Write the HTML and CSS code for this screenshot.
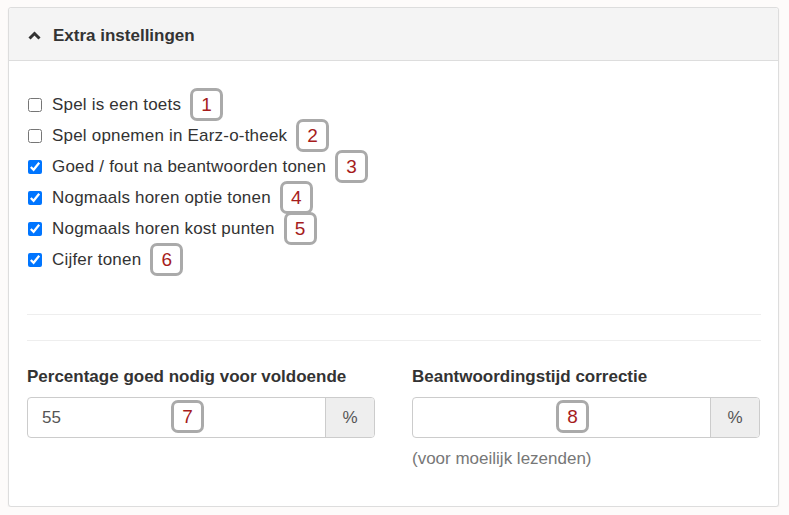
FILE: index.html
```html
<!DOCTYPE html>
<html>
  <head>
    <title>Extra instellingen</title>
    <link rel="stylesheet" href="styles.css">
  </head>
  <body>
    <div class="panel">
      <div class="panel-heading">
        <svg class="chevron" width="13" height="9" viewBox="0 0 13 9">
          <path d="M1.5 7.5 L6.5 2.5 L11.5 7.5" fill="none" stroke="#333" stroke-width="3"/>
        </svg>
        <span class="panel-title">Extra instellingen</span>
      </div>
      <div class="panel-body">
        <!-- Checkbox options -->
        <div class="options">
          <label class="option"><input type="checkbox"> Spel is een toets <span class="marker">1</span></label>
          <label class="option"><input type="checkbox"> Spel opnemen in Earz-o-theek <span class="marker">2</span></label>
          <label class="option"><input type="checkbox" checked> Goed / fout na beantwoorden tonen <span class="marker">3</span></label>
          <label class="option"><input type="checkbox" checked> Nogmaals horen optie tonen <span class="marker">4</span></label>
          <label class="option"><input type="checkbox" checked> Nogmaals horen kost punten <span class="marker">5</span></label>
          <label class="option"><input type="checkbox" checked> Cijfer tonen <span class="marker">6</span></label>
        </div>
        <hr>
        <hr class="second">
        <!-- Number fields -->
        <div class="fields">
          <div class="field">
            <div class="field-label">Percentage goed nodig voor voldoende</div>
            <div class="input-group">
              <div class="input-box">
                <span class="value">55</span>
                <span class="marker field-marker">7</span>
              </div>
              <div class="addon">%</div>
            </div>
          </div>
          <div class="field">
            <div class="field-label">Beantwoordingstijd correctie</div>
            <div class="input-group">
              <div class="input-box">
                <span class="value"></span>
                <span class="marker field-marker">8</span>
              </div>
              <div class="addon">%</div>
            </div>
            <div class="help">(voor moeilijk lezenden)</div>
          </div>
        </div>
      </div>
    </div>
  </body>
</html>
```

FILE: styles.css
```css
body {
  margin: 0;
  background-color: #fdfbfa;
  font-family: "Liberation Sans", Arial, sans-serif;
  color: #333;
}

.panel {
  margin: 7px 0 0 8px;
  width: 771px;
  height: 500px;
  box-sizing: border-box;
  background-color: #fff;
  border: 1px solid #ddd;
  border-radius: 3px;
  box-shadow: 0 1px 2px rgba(0,0,0,0.06);
}

.panel-heading {
  display: flex;
  align-items: center;
  height: 52px;
  padding-left: 19px;
  background-color: #f4f4f4;
  border-bottom: 1px solid #ddd;
  border-radius: 3px 3px 0 0;
}

.chevron {
  margin: 2px 12px 0 0;
}

.panel-title {
  font-size: 17px;
  font-weight: bold;
  padding-top: 3px;
}

.panel-body {
  padding: 28px 17px 0 18px;
}

.options {
  display: flex;
  flex-direction: column;
}

.option {
  display: flex;
  align-items: center;
  height: 31px;
  font-size: 17px;
  letter-spacing: 0.2px;
}

.option input {
  width: 14px;
  height: 14px;
  margin: 0 10px 0 1px;
}

.marker {
  display: inline-flex;
  align-items: center;
  justify-content: center;
  width: 27px;
  height: 27px;
  margin-left: 9px;
  border: 3px solid #aaa;
  border-radius: 7px;
  background-color: #fff;
  color: #a61c1c;
  font-size: 19px;
}

hr {
  margin: 39px 0 0 0;
  border: none;
  border-top: 1px solid #eee;
}

hr.second {
  margin-top: 25px;
}

.fields {
  display: grid;
  grid-template-columns: 348px 348px;
  column-gap: 37px;
  padding-top: 26px;
}

.field-label {
  font-size: 17px;
  font-weight: bold;
  margin-bottom: 10px;
}

.input-group {
  display: flex;
  height: 41px;
  box-sizing: border-box;
  border: 1px solid #ccc;
  border-radius: 4px;
}

.input-box {
  flex: 1;
  display: flex;
  align-items: center;
  position: relative;
  padding-left: 14px;
  font-size: 17px;
  color: #555;
}

.field-marker {
  position: absolute;
  left: 143px;
  top: 2px;
  margin: 0;
}

.addon {
  width: 48px;
  display: flex;
  align-items: center;
  justify-content: center;
  background-color: #eee;
  border-left: 1px solid #ccc;
  border-radius: 0 3px 3px 0;
  font-size: 17px;
  color: #555;
}

.help {
  margin-top: 11px;
  font-size: 17px;
  color: #777;
}
```
